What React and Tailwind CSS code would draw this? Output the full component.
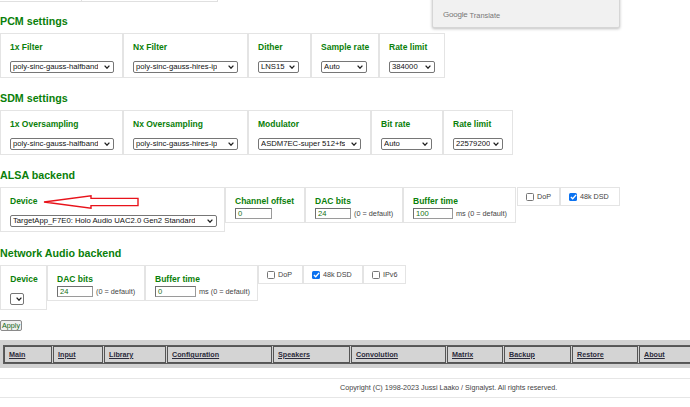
import React from 'react';

const GREEN = 'text-[#0a800a]';

function Chevron() {
  return (
    <svg width="6" height="4" viewBox="0 0 6 4" className="shrink-0">
      <path d="M0.6 0.6 L3 3.2 L5.4 0.6" fill="none" stroke="#222" strokeWidth="1.3" />
    </svg>
  );
}

// fake native select, sized to the pixel
function Select({ value, className = '' }) {
  return (
    <div className={`flex items-center justify-between h-[12px] border border-[#767676] rounded-[2px] bg-white pl-[2px] pr-[3px] gap-[2px] overflow-hidden ${className}`}>
      <span className="text-[7.7px] leading-none text-[#111] whitespace-nowrap overflow-hidden">{value}</span>
      <Chevron />
    </div>
  );
}

function TextInput({ value, className = '' }) {
  return (
    <div className={`h-[11px] border border-[#9a9a9a] border-t-[#6f6f6f] border-l-[#6f6f6f] bg-white pl-[2px] text-[7.6px] leading-[9px] text-[#167016] ${className}`}>
      {value}
    </div>
  );
}

function Label({ children, className = '' }) {
  return <div className={`text-[8.5px] leading-[13px] font-bold ${GREEN} whitespace-nowrap ${className}`}>{children}</div>;
}

function Heading({ children, className = '' }) {
  return <div className={`text-[10.7px] leading-[16px] font-bold ${GREEN} ${className}`}>{children}</div>;
}

function SelectCell({ label, value, w, sw, className = '' }) {
  return (
    <div className={`shrink-0 border border-[#e4e4e4] pt-[7px] pb-[4px] pl-[9px] ${w} ${className}`}>
      <Label>{label}</Label>
      <Select value={value} className={`mt-[7px] ${sw}`} />
    </div>
  );
}

function InputCell({ label, value, iw, suffix, w }) {
  return (
    <div className={`shrink-0 border border-[#e4e4e4] pt-[7px] pb-[3px] pl-[9px] ${w}`}>
      <Label>{label}</Label>
      <div className="flex items-center gap-[3px]">
        <TextInput value={value} className={iw} />
        <span className="text-[7.3px] leading-none text-[#444] whitespace-nowrap">{suffix}</span>
      </div>
    </div>
  );
}

function CheckCell({ label, checked, w }) {
  return (
    <div className={`shrink-0 border border-[#e4e4e4] pt-[4px] pb-[4px] pl-[8px] ${w}`}>
      <div className="flex items-center h-[9px] gap-[3px]">
        {checked ? (
          <span className="w-[8px] h-[8px] rounded-[1.5px] bg-[#0b72f0] flex items-center justify-center">
            <svg width="7" height="6" viewBox="0 0 7 6">
              <path d="M0.9 3.1 L2.7 4.8 L6.1 0.9" fill="none" stroke="#fff" strokeWidth="1.4" />
            </svg>
          </span>
        ) : (
          <span className="w-[8px] h-[8px] rounded-[1.5px] border border-[#767676] bg-white" />
        )}
        <span className="text-[7.2px] leading-none text-[#444]">{label}</span>
      </div>
    </div>
  );
}

const navItems = [
  { label: 'Main', w: 'w-[48px]' },
  { label: 'Input', w: 'w-[50px]' },
  { label: 'Library', w: 'w-[62px]' },
  { label: 'Configuration', w: 'w-[105px]' },
  { label: 'Speakers', w: 'w-[77px]' },
  { label: 'Convolution', w: 'w-[95px]' },
  { label: 'Matrix', w: 'w-[56px]' },
  { label: 'Backup', w: 'w-[67px]' },
  { label: 'Restore', w: 'w-[66px]' },
  { label: 'About', w: 'w-[80px]' },
];

export default function App() {
  return (
    <div className="relative w-[690px] h-[407px] overflow-hidden bg-white font-['Liberation_Sans',Arial,sans-serif] text-[#333]">
      {/* leftover of the table above */}
      <div className="flex h-[2px]">
        <div className="w-[82px] border-b border-r border-[#e0e0e0]" />
        <div className="w-[136px] border-b border-r border-[#e0e0e0]" />
      </div>

      {/* Google Translate popup */}
      <div className="absolute left-[432px] top-[-10px] w-[188px] h-[38px] bg-[#f1f1f1] border border-[#d6d6d6] rounded-b-[2px] shadow-[0_1px_3px_rgba(0,0,0,0.25)] flex items-end pb-[8px] pl-[10px] gap-[2px]">
        <span className="text-[8px] leading-none text-[#777] tracking-[-0.2px]">Google</span>
        <span className="text-[7.4px] leading-none text-[#777]">Translate</span>
      </div>

      <Heading className="mt-[11px]">PCM settings</Heading>
      <div className="flex mt-[4px]">
        <SelectCell label="1x Filter" value="poly-sinc-gauss-halfband" w="w-[123px]" sw="w-[104px]" />
        <SelectCell label="Nx Filter" value="poly-sinc-gauss-hires-ip" w="w-[125px]" sw="w-[105px]" />
        <SelectCell label="Dither" value="LNS15" w="w-[63px]" sw="w-[41px]" />
        <SelectCell label="Sample rate" value="Auto" w="w-[68px]" sw="w-[46px]" />
        <SelectCell label="Rate limit" value="384000" w="w-[66px]" sw="w-[46px]" />
      </div>

      <Heading className="mt-[12px]">SDM settings</Heading>
      <div className="flex mt-[4px]">
        <SelectCell label="1x Oversampling" value="poly-sinc-gauss-halfband" w="w-[123px]" sw="w-[104px]" />
        <SelectCell label="Nx Oversampling" value="poly-sinc-gauss-hires-ip" w="w-[125px]" sw="w-[105px]" />
        <SelectCell label="Modulator" value="ASDM7EC-super 512+fs" w="w-[123px]" sw="w-[103px]" />
        <SelectCell label="Bit rate" value="Auto" w="w-[72px]" sw="w-[51px]" />
        <SelectCell label="Rate limit" value="22579200" w="w-[70px]" sw="w-[50px]" />
      </div>

      <Heading className="mt-[12px]">ALSA backend</Heading>
      <div className="flex items-start mt-[4px]">
        <div className="relative">
          <SelectCell label="Device" value="TargetApp_F7E0: Holo Audio UAC2.0 Gen2 Standard" w="w-[225px]" sw="w-[207px]" />
          <svg className="absolute left-[40px] top-[6px]" width="102" height="18" viewBox="0 0 102 18">
            <path d="M4 9 L51 2.8 L51 5.4 L98 5.4 L98 12.6 L51 12.6 L51 15.2 Z" fill="none" stroke="#e8131b" strokeWidth="1.4" strokeLinejoin="miter" />
          </svg>
        </div>
        <InputCell label="Channel offset" value="0" iw="w-[37px]" suffix="" w="w-[80px]" />
        <InputCell label="DAC bits" value="24" iw="w-[36px]" suffix="(0 = default)" w="w-[98px]" />
        <InputCell label="Buffer time" value="100" iw="w-[40px]" suffix="ms (0 = default)" w="w-[113px]" />
        <div className="ml-[1px] flex">
          <CheckCell label="DoP" w="w-[43px]" />
          <CheckCell label="48k DSD" checked w="w-[60px]" />
        </div>
      </div>

      <Heading className="mt-[13px]">Network Audio backend</Heading>
      <div className="flex items-start mt-[4px]">
        <div className="shrink-0 w-[47px] border border-[#e4e4e4] pt-[7px] pb-[4px] pl-[9px]">
          <Label className="w-[28px] text-center">Device</Label>
          <Select value="" className="mt-[7px] w-[14px] pl-[3px]" />
        </div>
        <InputCell label="DAC bits" value="24" iw="w-[36px]" suffix="(0 = default)" w="w-[98px]" />
        <InputCell label="Buffer time" value="0" iw="w-[41px]" suffix="ms (0 = default)" w="w-[113px]" />
        <CheckCell label="DoP" w="w-[45px]" />
        <CheckCell label="48k DSD" checked w="w-[60px]" />
        <CheckCell label="IPv6" w="w-[43px]" />
      </div>

      <button className="mt-[10px] block h-[11px] px-[1px] border border-[#8a8a8a] rounded-[2px] bg-[#efefef] text-[7.2px] leading-none text-[#156815]">
        Apply
      </button>

      {/* navigation bar */}
      <div className="mt-[9px] h-[28px] bg-[#d2d2d2] pt-[5px] pl-[3px]">
        <div className="flex gap-[1px] h-[19px] border border-[#5c5c5c] border-r-0 w-[700px]">
          {navItems.map((item) => (
            <div key={item.label} className={`shrink-0 ${item.w} h-full border border-[#555] bg-[#d4d4d4] flex items-center pl-[4px]`}>
              <span className="text-[7.2px] leading-none font-bold underline text-[#2c2c3c]">{item.label}</span>
            </div>
          ))}
        </div>
      </div>

      {/* footer */}
      <div className="mt-[10px] h-[20px] border-t border-b border-[#e6e6e6] flex items-center pl-[340px]">
        <span className="text-[7.2px] leading-none text-[#444] whitespace-nowrap">
          Copyright (C) 1998-2023 Jussi Laako / Signalyst. All rights reserved.
        </span>
      </div>
    </div>
  );
}
